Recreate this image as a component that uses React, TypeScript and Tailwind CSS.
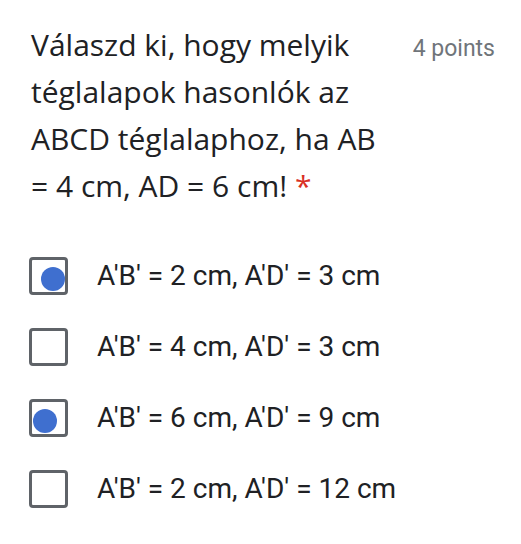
const options = [
  { label: "A'B' = 2 cm, A'D' = 3 cm", checked: true, dot: "right" },
  { label: "A'B' = 4 cm, A'D' = 3 cm", checked: false, dot: "" },
  { label: "A'B' = 6 cm, A'D' = 9 cm", checked: true, dot: "left" },
  { label: "A'B' = 2 cm, A'D' = 12 cm", checked: false, dot: "" },
];

function Box({ checked, dot }: { checked: boolean; dot: string }) {
  return (
    <div className="relative w-[39px] h-[38px] shrink-0 rounded-[4px] border-[3px] border-[#5f6368] bg-white">
      {checked && (
        <div
          className={
            dot === "left"
              ? "absolute left-[1px] bottom-[1px] w-[24px] h-[24px] rounded-full bg-[#3f6fcf]"
              : "absolute right-0 bottom-[1px] w-[24px] h-[24px] rounded-full bg-[#3f6fcf]"
          }
        />
      )}
    </div>
  );
}

export default function App() {
  return (
    <div className="w-[521px] h-[544px] bg-white text-[#202124] pl-[31px] pr-[26px] pt-[21px]">
      <div className="flex items-start justify-between">
        <h1 className="w-[360px] text-[30px] leading-[47px] font-['Open_Sans'] font-normal">
          Válaszd ki, hogy melyik téglalapok hasonlók az ABCD téglalaphoz, ha AB = 4 cm, AD = 6 cm!{" "}
          <span className="text-[#d93025]">*</span>
        </h1>
        <span className="mt-[14px] text-[23px] leading-[28px] text-[#70757a] font-[Roboto]">
          4 points
        </span>
      </div>

      <div className="mt-[48px] flex flex-col gap-[33px] font-[Roboto]">
        {options.map((o) => (
          <div key={o.label} className="flex items-center gap-[29px] -ml-[2px]">
            <Box checked={o.checked} dot={o.dot} />
            <span className="text-[28px] leading-[38px]">{o.label}</span>
          </div>
        ))}
      </div>
    </div>
  );
}
